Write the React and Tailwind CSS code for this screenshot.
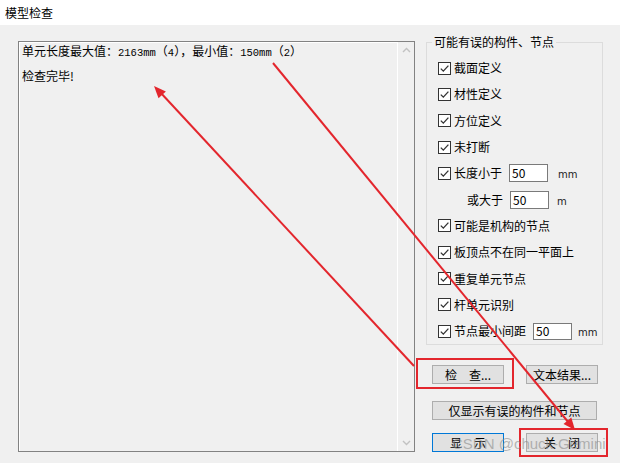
import React from 'react';

const Check = () => (
  <span className="w-[13px] h-[13px] border border-[#333333] bg-white flex items-center justify-center shrink-0">
    <svg width="11" height="11" viewBox="0 0 11 11">
      <path d="M1.8 5.6 L4.3 8.1 L9.4 2.6" fill="none" stroke="#333333" strokeWidth="1.3" />
    </svg>
  </span>
);

const Field = ({ value, w = 'w-[39px]', h = 'h-[18px]' }) => (
  <span className={`${w} ${h} bg-white border border-[#7a7a7a] flex items-center pl-[2px] text-[12px] leading-none`}>
    {value}
  </span>
);

const Row = ({ children }) => (
  <div className="h-[26.3px] flex items-center">{children}</div>
);

const Btn = ({ children, w = 'w-[72px]', def = false }) => (
  <button
    className={`${w} h-[19px] bg-[#e1e1e1] border ${def ? 'border-[#0078d7]' : 'border-[#adadad]'} flex items-center justify-center text-[12px] leading-none text-black whitespace-pre`}
  >
    {children}
  </button>
);

const Mono = ({ children }) => (
  <span className="text-[10.5px] text-black" style={{ fontFamily: '"Liberation Mono", monospace' }}>
    {children}
  </span>
);

const Unit = ({ children }) => (
  <span className="text-[10px] text-[#222222]" style={{ fontFamily: '"DejaVu Sans", sans-serif' }}>
    {children}
  </span>
);

const App = () => {
  const items = [
    '截面定义',
    '材性定义',
    '方位定义',
    '未打断',
  ];

  return (
    <div
      className="relative w-[620px] h-[463px] bg-[#f0f0f0] overflow-hidden text-black antialiased"
      style={{ fontFamily: '"Noto Sans CJK SC", "Liberation Sans", sans-serif' }}
    >
      {/* TITLE BAR */}
      <div className="h-[25px] bg-white flex items-center px-[5px] text-[12px]">
        模型检查
      </div>

      {/* BODY */}
      <div className="flex pt-[16px] pl-[18px]">

        {/* RESULT TEXT */}
        <div className="w-[397px] h-[411px] border border-[#828282] flex">
          <div className="flex-1 pl-[2px] text-[12px] leading-[16px] border-l border-t border-white">
            <p className="whitespace-nowrap">
              单元长度最大值：<Mono>2163mm</Mono>（<Mono>4</Mono>），最小值：<Mono>150mm</Mono>（<Mono>2</Mono>）
            </p>
            <p className="mt-[7px]">检查完毕!</p>
          </div>
          <div className="w-[17px] border-l border-white flex flex-col items-center justify-between py-[5px]">
            <svg width="9" height="6" viewBox="0 0 9 6">
              <path d="M1 5 L4.5 1.5 L8 5" fill="none" stroke="#c2c2c2" strokeWidth="1.4" />
            </svg>
            <svg width="9" height="6" viewBox="0 0 9 6">
              <path d="M1 1 L4.5 4.5 L8 1" fill="none" stroke="#c2c2c2" strokeWidth="1.4" />
            </svg>
          </div>
        </div>

        {/* RIGHT SIDE */}
        <div className="ml-[11px] flex flex-col">

          {/* GROUP */}
          <div className="w-[177px] h-[303px] mt-[1px] border border-[#dcdcdc] flex flex-col">
            <span className="-mt-[9px] ml-[5px] px-[2px] self-start bg-[#f0f0f0] text-[12px] leading-[16px]">
              可能有误的构件、节点
            </span>

            <div className="mt-[5px] pl-[11px] flex flex-col text-[12px]">
              {items.map((t) => (
                <Row key={t}>
                  <Check />
                  <span className="ml-[3px]">{t}</span>
                </Row>
              ))}

              <Row>
                <Check />
                <span className="ml-[3px]">长度小于</span>
                <span className="ml-[7px]"><Field value="50" /></span>
                <span className="ml-[10px]"><Unit>mm</Unit></span>
              </Row>

              <Row>
                <span className="ml-[29px]">或大于</span>
                <span className="ml-[7px]"><Field value="50" /></span>
                <span className="ml-[8px]"><Unit>m</Unit></span>
              </Row>

              <Row>
                <Check />
                <span className="ml-[3px]">可能是机构的节点</span>
              </Row>
              <Row>
                <Check />
                <span className="ml-[3px]">板顶点不在同一平面上</span>
              </Row>
              <Row>
                <Check />
                <span className="ml-[3px]">重复单元节点</span>
              </Row>
              <Row>
                <Check />
                <span className="ml-[3px]">杆单元识别</span>
              </Row>
              <Row>
                <Check />
                <span className="ml-[3px]">节点最小间距</span>
                <span className="ml-[7px]"><Field value="50" h="h-[17px]" /></span>
                <span className="ml-[6px]"><Unit>mm</Unit></span>
              </Row>
            </div>
          </div>

          {/* BUTTONS */}
          <div className="ml-[6px] mt-[20px] flex gap-[22px]">
            <Btn>{'检　查...'}</Btn>
            <Btn>文本结果...</Btn>
          </div>
          <div className="ml-[6px] mt-[17px]">
            <Btn w="w-[165px]">仅显示有误的构件和节点</Btn>
          </div>
          <div className="ml-[6px] mt-[13px] flex gap-[22px]">
            <Btn def>{'显　示'}</Btn>
            <Btn>{'关　闭'}</Btn>
          </div>
        </div>
      </div>

      {/* ANNOTATIONS */}
      <svg className="absolute inset-0 pointer-events-none" width="620" height="463" viewBox="0 0 620 463">
        <line x1="414" y1="366" x2="160" y2="92" stroke="#e3262d" strokeWidth="2" />
        <polygon points="154,86 165.9,91.4 158.5,98.2" fill="#e3262d" />
        <line x1="273" y1="63" x2="569" y2="423" stroke="#e3262d" strokeWidth="2" />
        <polygon points="575,430 571.3,417.5 563.5,423.9" fill="#e3262d" />
        <rect x="417" y="359" width="96" height="29" fill="none" stroke="#e3262d" strokeWidth="2" />
        <rect x="520" y="429" width="87" height="27" fill="none" stroke="#e3262d" strokeWidth="2" />
      </svg>

      {/* WATERMARK */}
      <span
        className="absolute left-[452px] top-[435px] text-[15px] leading-[18px] whitespace-nowrap text-[#8a8a8a]/60 pointer-events-none"
        style={{ fontFamily: '"Liberation Sans", sans-serif' }}
      >
        CSDN @chuck-Gemini
      </span>
    </div>
  );
};

export default App;
